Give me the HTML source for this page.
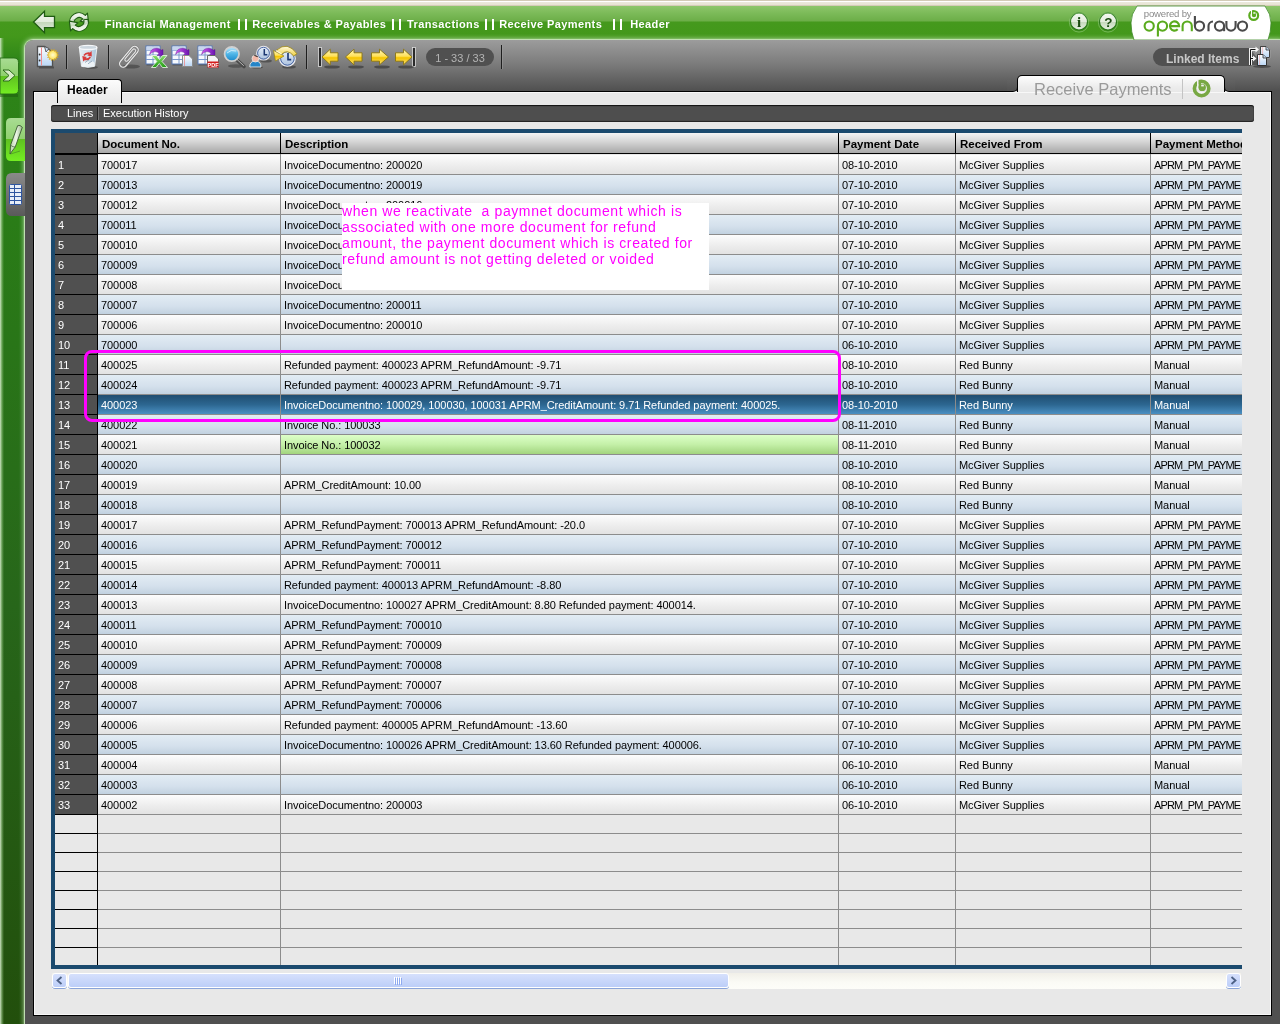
<!DOCTYPE html><html><head><meta charset="utf-8"><style>
*{margin:0;padding:0;box-sizing:border-box}
html,body{width:1280px;height:1024px;overflow:hidden;background:#505050;font-family:"Liberation Sans",sans-serif}
.a{position:absolute}
#top{left:0;top:0;width:1280px;height:6px;background:linear-gradient(#d3cbb7 0,#d3cbb7 1px,#fff 1px,#fff 2px,#ece9dc 2px,#e6e2d2 5px,#d5ccb8 5px)}
#green{left:0;top:6px;width:1280px;height:1018px;background:linear-gradient(#8ec66b 0,#7ab957 8px,#6cae48 15px,#45991d 16px,#43981b 30px,#2e8518 55px,#2a7d17 200px,#27661a 600px,#224f0c 1018px)}
#lstrip{left:0;top:38px;width:4px;height:986px;background:linear-gradient(90deg,rgba(215,235,205,0.95),rgba(160,205,140,0.5) 2px,rgba(60,140,40,0))}
#panel{left:25px;top:40px;width:1255px;height:984px;background:linear-gradient(#9c9c9c 0,#7a7a7a 25px,#535353 49px,#505050 51px);border-top-left-radius:8px;box-shadow:0 0 1px 1px #c8e6bb,0 0 4px 2px rgba(200,230,187,0.6)}
#content{left:33px;top:91px;width:1239px;height:925px;background:#e8e8e8;border:1px solid #000;box-shadow:inset 0 0 0 1px #f8f8f8}
.crumb{left:105px;top:18px;color:#fff;font-weight:bold;font-size:11px;line-height:13px;white-space:pre;letter-spacing:0.4px}
.sep{width:1px;background:#2a2a2a;box-shadow:1px 0 0 #a8a8a8}
#subtabs{left:51px;top:105px;width:1203px;height:17px;background:#4e4e4e;border-radius:3px;box-shadow:inset 0 1px 1px #111, inset 0 -1px 1px #222}
#subtabs span{position:absolute;top:1px;color:#fff;font-size:11px;line-height:15px}
#gridbox{left:51px;top:129px;width:1191px;height:840px;background:#1b4a6e;overflow:hidden}
#grid{left:4px;top:4px;width:1187px;height:832px;background:#e8e8e8;overflow:hidden}
.hd{position:absolute;top:0;height:20px;background:linear-gradient(#f4f4f4,#d8d8d8 40%,#a8a8a8);font-weight:bold;font-size:11.5px;line-height:22px;color:#000;padding-left:4px;white-space:nowrap;overflow:hidden}
.rn{position:absolute;left:0;width:42px;background:#505050;color:#fff;font-size:11px;padding-left:3px;line-height:21px}
.r{position:absolute;left:43px;width:1144px;height:19px}
.odd{background:linear-gradient(#fdfdfd,#ececec 60%,#e2e2e2)}
.even{background:linear-gradient(#e2ecf4,#d4e0ec 60%,#c2d2e0)}
.selr{background:linear-gradient(#1f4d70,#2c6690 50%,#4a8fc2)}
.c{position:absolute;top:0;height:19px;font-size:11px;line-height:21px;padding-left:3px;letter-spacing:-0.07px;white-space:nowrap;overflow:hidden;color:#000}
.vl{position:absolute;width:1px;background:#8c8c8c}
.hl{position:absolute;height:1px;background:#8c8c8c}
</style></head><body><div id="wrap" style="position:absolute;left:0;top:0;width:1280px;height:1024px;overflow:hidden;will-change:transform">
<div id="top" class="a"></div>
<div id="green" class="a"></div>
<div id="lstrip" class="a"></div>
<div id="panel" class="a"></div>
<div class="a crumb" style="left:104.8px">Financial Management</div>
<div class="a crumb" style="left:252.2px">Receivables &amp; Payables</div>
<div class="a crumb" style="left:407px">Transactions</div>
<div class="a crumb" style="left:499.2px">Receive Payments</div>
<div class="a crumb" style="left:630.2px">Header</div>
<div class="a" style="left:238px;top:19px;width:2px;height:11px;background:#fff"></div>
<div class="a" style="left:245px;top:19px;width:2px;height:11px;background:#fff"></div>
<div class="a" style="left:392px;top:19px;width:2px;height:11px;background:#fff"></div>
<div class="a" style="left:399px;top:19px;width:2px;height:11px;background:#fff"></div>
<div class="a" style="left:485px;top:19px;width:2px;height:11px;background:#fff"></div>
<div class="a" style="left:492px;top:19px;width:2px;height:11px;background:#fff"></div>
<div class="a" style="left:613px;top:19px;width:2px;height:11px;background:#fff"></div>
<div class="a" style="left:620px;top:19px;width:2px;height:11px;background:#fff"></div>
<div id="content" class="a"></div>
<div class="a" style="left:57px;top:79px;width:65px;height:24px;background:linear-gradient(#fcfcfc,#f4f4f4 40%,#e8e8e8);border:1px solid #000;border-bottom:none;border-radius:4px 4px 0 0;"></div>
<div class="a" style="left:67px;top:82.5px;font-weight:bold;font-size:12px;line-height:14px;color:#000">Header</div>
<div class="a" style="left:1012px;top:86px;width:218px;height:6px;background:#e8e8e8"></div>
<div class="a" style="left:1007px;top:80px;width:11px;height:12px;background:linear-gradient(#636363,#525252);border-right:1px solid #000;border-bottom:1px solid #000;border-bottom-right-radius:5px"></div>
<div class="a" style="left:1224px;top:80px;width:11px;height:12px;background:linear-gradient(#636363,#525252);border-left:1px solid #000;border-bottom:1px solid #000;border-bottom-left-radius:5px"></div>
<div class="a" style="left:1017px;top:75px;width:208px;height:17px;background:linear-gradient(#fdfdfd,#ececec 70%,#e8e8e8);border:1px solid #000;border-bottom:none;border-radius:5px 5px 0 0;"></div>
<div class="a" style="left:1034px;top:79px;font-size:16.5px;line-height:20px;color:#9a9a9a">Receive Payments</div>
<div class="a" style="left:1182px;top:79px;width:1px;height:20px;background:#c4c4c4"></div>
<svg class="a" style="left:1190px;top:77px" width="24" height="24"><g transform="translate(-1190,-77)"><circle cx="1201.6" cy="88.5" r="7.2" fill="none" stroke="#78a843" stroke-width="3.6"/><rect x="1197" y="79" width="1.7" height="10" fill="#f3f3f3"/><circle cx="1202.2" cy="87.4" r="3.7" fill="#78a843"/><rect x="1198.7" y="79.8" width="2.4" height="8" fill="#78a843"/><rect x="1201.2" y="84.6" width="2.6" height="1.8" fill="#f3f3f3"/></g></svg>
<div id="subtabs" class="a"><span style="left:16px">Lines</span><span style="left:46px;top:2px;width:1px;height:13px;background:#222;box-shadow:1px 0 0 #777"></span><span style="left:52px">Execution History</span></div>
<div class="a" style="left:1153px;top:48px;width:98px;height:18px;background:#505050;border-radius:9px 0 0 9px"></div>
<div class="a" style="left:1166px;top:51.5px;font-weight:bold;font-size:12px;line-height:15px;color:#c8c8c8">Linked Items</div>
<div class="a" style="left:426px;top:48px;width:68px;height:18px;background:#505050;border-radius:9px"></div>
<div class="a" style="left:426px;top:50.5px;width:68px;text-align:center;font-size:11px;line-height:15px;color:#b4b4b4">1 - 33 / 33</div>
<svg class="a" style="left:0;top:0" width="1280" height="1024"><defs>
<linearGradient id="gy" x1="0" y1="0" x2="0" y2="1"><stop offset="0" stop-color="#fff7c0"/><stop offset="0.45" stop-color="#ffe15a"/><stop offset="0.55" stop-color="#f5c400"/><stop offset="1" stop-color="#fbe27a"/></linearGradient>
<linearGradient id="gw" x1="0" y1="0" x2="0" y2="1"><stop offset="0" stop-color="#f6f9f3"/><stop offset="0.5" stop-color="#e2ecdc"/><stop offset="0.52" stop-color="#c4d8bb"/><stop offset="1" stop-color="#e6efe2"/></linearGradient>
<linearGradient id="gpage" x1="0" y1="0" x2="0" y2="1"><stop offset="0" stop-color="#ffffff"/><stop offset="1" stop-color="#b9d6f5"/></linearGradient>
<linearGradient id="gbtn1" x1="0" y1="0" x2="0" y2="1"><stop offset="0" stop-color="#a9dc94"/><stop offset="0.5" stop-color="#8fd06e"/><stop offset="0.5" stop-color="#5fc021"/><stop offset="1" stop-color="#74ee22"/></linearGradient>
<linearGradient id="gtab" x1="0" y1="0" x2="0" y2="1"><stop offset="0" stop-color="#8a8a8a"/><stop offset="1" stop-color="#5a5a5a"/></linearGradient>
<linearGradient id="gclock" x1="0" y1="0" x2="0" y2="1"><stop offset="0" stop-color="#e8f0fa"/><stop offset="1" stop-color="#a9c0de"/></linearGradient>
<linearGradient id="glens" x1="0" y1="0" x2="0" y2="1"><stop offset="0" stop-color="#bfe8fb"/><stop offset="0.5" stop-color="#4fb6e8"/><stop offset="1" stop-color="#1b87c9"/></linearGradient>
<linearGradient id="gpurple" x1="0" y1="0" x2="1" y2="0"><stop offset="0" stop-color="#d55af0"/><stop offset="1" stop-color="#6a14b0"/></linearGradient>
<linearGradient id="gxl" x1="0" y1="0" x2="0" y2="1"><stop offset="0" stop-color="#8ee070"/><stop offset="1" stop-color="#1e9a10"/></linearGradient>
<linearGradient id="gyarc" x1="0" y1="0" x2="0" y2="1"><stop offset="0" stop-color="#fffbe0"/><stop offset="1" stop-color="#f0d040"/></linearGradient>
<radialGradient id="gsun" cx="0.5" cy="0.5" r="0.5"><stop offset="0" stop-color="#fffbd0"/><stop offset="0.6" stop-color="#ffe870"/><stop offset="1" stop-color="#d9a81a"/></radialGradient>
</defs>
<path d="M33.5,22 L44.5,11.2 L44.5,16.4 L54.5,16.4 L54.5,27.6 L44.5,27.6 L44.5,32.8 Z" fill="url(#gw)" stroke="#1f5c12" stroke-width="1.3" stroke-linejoin="miter"/>
<g transform="translate(79,22) rotate(-8)" fill="url(#gw)" stroke="#1f5c12" stroke-width="1.1" stroke-linejoin="round"><path d="M-9.2,1.5 A9.2,9.2 0 0 1 7.2,-5.6 L9.6,-7.6 L9.4,2.2 L1.2,-0.6 L4.1,-2.6 A5.2,5.2 0 0 0 -5,1.5 Z"/><g transform="rotate(180)"><path d="M-9.2,1.5 A9.2,9.2 0 0 1 7.2,-5.6 L9.6,-7.6 L9.4,2.2 L1.2,-0.6 L4.1,-2.6 A5.2,5.2 0 0 0 -5,1.5 Z"/></g></g>
<circle cx="1079" cy="21.5" r="8.6" fill="url(#gw)" stroke="#2b7a1a" stroke-width="1.3"/>
<circle cx="1079" cy="22.5" r="9.6" fill="none" stroke="#b8e0a8" stroke-width="0.6" opacity="0.7"/>
<circle cx="1108" cy="21.5" r="8.6" fill="url(#gw)" stroke="#2b7a1a" stroke-width="1.3"/>
<circle cx="1108" cy="22.5" r="9.6" fill="none" stroke="#b8e0a8" stroke-width="0.6" opacity="0.7"/>
<text x="1079" y="27" text-anchor="middle" font-family="Liberation Serif" font-weight="bold" font-size="15" fill="#1a4a10">i</text>
<text x="1108.3" y="26.8" text-anchor="middle" font-family="Liberation Sans" font-weight="bold" font-size="13.5" fill="#1a4a10">?</text>
<rect x="39" y="66.5" width="15" height="2" fill="#222" opacity="0.45"/>
<path d="M37.5,46.5 L44.5,46.5 L52.5,52 L52.5,66.5 L37.5,66.5 Z" fill="url(#gpage)" stroke="#505050" stroke-width="1.3"/>
<line x1="41.5" y1="47.5" x2="41.5" y2="65.5" stroke="#f08a8a" stroke-width="1"/>
<circle cx="39.6" cy="54.5" r="0.9" fill="#333"/><circle cx="39.6" cy="60.5" r="0.9" fill="#333"/>
<path d="M44.5,46.5 L49,48.5 L46,52 Z" fill="#c8dcf4" stroke="#505050" stroke-width="0.9"/>
<polygon points="58.70,55.00 56.70,55.89 58.12,57.56 55.93,57.49 56.48,59.61 54.54,58.60 54.11,60.75 52.80,59.00 51.49,60.75 51.06,58.60 49.12,59.61 49.67,57.49 47.48,57.56 48.90,55.89 46.90,55.00 48.90,54.11 47.48,52.44 49.67,52.51 49.12,50.39 51.06,51.40 51.49,49.25 52.80,51.00 54.11,49.25 54.54,51.40 56.48,50.39 55.93,52.51 58.12,52.44 56.70,54.11" fill="url(#gsun)" stroke="#d9a81a" stroke-width="0.5"/>
<rect x="66" y="45" width="1" height="24" fill="#1e1e1e"/><rect x="67" y="45" width="1" height="24" fill="#a0a0a0" opacity="0.5"/>
<rect x="108" y="45" width="1" height="24" fill="#1e1e1e"/><rect x="109" y="45" width="1" height="24" fill="#a0a0a0" opacity="0.5"/>
<rect x="306" y="45" width="1" height="24" fill="#1e1e1e"/><rect x="307" y="45" width="1" height="24" fill="#a0a0a0" opacity="0.5"/>
<rect x="501" y="45" width="1" height="24" fill="#1e1e1e"/><rect x="502" y="45" width="1" height="24" fill="#a0a0a0" opacity="0.5"/>
<ellipse cx="91" cy="67.3" rx="7" ry="1.6" fill="#2a2a2a" opacity="0.45"/>
<linearGradient id="gtrash" x1="0" y1="0" x2="1" y2="0"><stop offset="0" stop-color="#e4ecf2"/><stop offset="0.5" stop-color="#d2e0ea"/><stop offset="1" stop-color="#a9c3da"/></linearGradient>
<path d="M79.3,47.5 L96.9,47.5 L94.6,66.3 Q88,68.4 81.5,66.3 Z" fill="url(#gtrash)" stroke="#f2f6f8" stroke-width="0.9"/>
<ellipse cx="88.1" cy="47.4" rx="8.8" ry="2.1" fill="#cbd6de" stroke="#f6f8fa" stroke-width="1.3"/>
<path d="M82.5,63 Q86,60 90,62 Q93,60 94.5,63 L94.3,66 Q88,67.6 81.8,66 Z" fill="#f2f6f8" opacity="0.9"/>
<path d="M85,62.5 L89,59.8 M88,63.8 L92,61" stroke="#7890a8" stroke-width="0.7"/>
<path d="M83.3,55 Q85.5,51.6 90,52.4 L91.6,51 L91.8,56.6 L87.2,55.6 L88.8,54.6 Q86,53.6 84.6,56 Z" fill="#d83a3a"/>
<path d="M91,57.5 Q89,61 84.6,60.2 L83.2,61.6 L82.3,56 L87,57 L85.6,58 Q88.4,59 89.6,56.6 Z" fill="#d83a3a"/>
<ellipse cx="131" cy="66.5" rx="9" ry="2" fill="#2a2a2a" opacity="0.45"/>
<g transform="translate(123.2,63.6) rotate(-50)" fill="none"><rect x="-3.6" y="-3.6" width="25" height="7.2" rx="3.6" stroke="#7a7a7a" stroke-width="2.2"/><rect x="-3.6" y="-3.6" width="25" height="7.2" rx="3.6" stroke="#ececec" stroke-width="1.2"/><rect x="3.5" y="-1.7" width="15" height="3.4" rx="1.7" stroke="#7a7a7a" stroke-width="2"/><rect x="3.5" y="-1.7" width="15" height="3.4" rx="1.7" stroke="#e4e4e4" stroke-width="1.1"/></g>
<rect x="146.5" y="64.0" width="14" height="1.5" fill="#222" opacity="0.4"/><rect x="146.0" y="46.0" width="14" height="18" fill="#f6f9fd" stroke="#5578b8" stroke-width="1"/><line x1="146.0" y1="50.5" x2="160.0" y2="50.5" stroke="#7a98cc" stroke-width="1"/><line x1="146.0" y1="55.0" x2="160.0" y2="55.0" stroke="#7a98cc" stroke-width="1"/><line x1="146.0" y1="59.5" x2="160.0" y2="59.5" stroke="#7a98cc" stroke-width="1"/><line x1="153.0" y1="46.0" x2="153.0" y2="64.0" stroke="#7a98cc" stroke-width="1"/><rect x="146.5" y="46.5" width="13" height="4.0" fill="#c8d6ee"/>
<path transform="translate(150,49)" d="M-0.5,5.5 Q1,-1.2 7,-0.8 Q10,-0.5 11.2,1.2 L13,0.5 L13,6.5 L7,6.5 L9,4.6 Q7.5,2.6 5,2.6 Q2,2.8 -0.5,5.5 Z" fill="url(#gpurple)" stroke="#5a1090" stroke-width="0.4"/>
<path d="M151.5,55.5 L156.5,55.5 L159.5,59.5 L162.5,55.5 L167,55.5 L162,61.5 L167.5,67.5 L162.5,67.5 L159.3,63.5 L156,67.5 L151.5,67.5 L156.8,61.5 Z" fill="url(#gxl)" stroke="#f0f8ee" stroke-width="0.8"/>
<rect x="172.5" y="64.0" width="14" height="1.5" fill="#222" opacity="0.4"/><rect x="172.0" y="46.0" width="14" height="18" fill="#f6f9fd" stroke="#5578b8" stroke-width="1"/><line x1="172.0" y1="50.5" x2="186.0" y2="50.5" stroke="#7a98cc" stroke-width="1"/><line x1="172.0" y1="55.0" x2="186.0" y2="55.0" stroke="#7a98cc" stroke-width="1"/><line x1="172.0" y1="59.5" x2="186.0" y2="59.5" stroke="#7a98cc" stroke-width="1"/><line x1="179.0" y1="46.0" x2="179.0" y2="64.0" stroke="#7a98cc" stroke-width="1"/><rect x="172.5" y="46.5" width="13" height="4.0" fill="#c8d6ee"/>
<path transform="translate(176,49)" d="M-0.5,5.5 Q1,-1.2 7,-0.8 Q10,-0.5 11.2,1.2 L13,0.5 L13,6.5 L7,6.5 L9,4.6 Q7.5,2.6 5,2.6 Q2,2.8 -0.5,5.5 Z" fill="url(#gpurple)" stroke="#5a1090" stroke-width="0.4"/>
<path d="M182.5,55.5 L189,55.5 L192.5,59 L192.5,66.5 L182.5,66.5 Z" fill="url(#gpage)" stroke="#8a8a8a" stroke-width="1"/>
<line x1="184.5" y1="56" x2="184.5" y2="66" stroke="#f08a8a" stroke-width="0.8"/>
<rect x="198.5" y="64.0" width="14" height="1.5" fill="#222" opacity="0.4"/><rect x="198.0" y="46.0" width="14" height="18" fill="#f6f9fd" stroke="#5578b8" stroke-width="1"/><line x1="198.0" y1="50.5" x2="212.0" y2="50.5" stroke="#7a98cc" stroke-width="1"/><line x1="198.0" y1="55.0" x2="212.0" y2="55.0" stroke="#7a98cc" stroke-width="1"/><line x1="198.0" y1="59.5" x2="212.0" y2="59.5" stroke="#7a98cc" stroke-width="1"/><line x1="205.0" y1="46.0" x2="205.0" y2="64.0" stroke="#7a98cc" stroke-width="1"/><rect x="198.5" y="46.5" width="13" height="4.0" fill="#c8d6ee"/>
<path transform="translate(202,49)" d="M-0.5,5.5 Q1,-1.2 7,-0.8 Q10,-0.5 11.2,1.2 L13,0.5 L13,6.5 L7,6.5 L9,4.6 Q7.5,2.6 5,2.6 Q2,2.8 -0.5,5.5 Z" fill="url(#gpurple)" stroke="#5a1090" stroke-width="0.4"/>
<path d="M207.5,55.5 L215,55.5 L218.5,59 L218.5,68 L207.5,68 Z" fill="#f4f4f4" stroke="#666" stroke-width="1"/>
<rect x="207.5" y="61.5" width="11" height="6" fill="#d41c1c"/>
<text x="213" y="67" text-anchor="middle" font-family="Liberation Sans" font-weight="bold" font-size="5.5" fill="#fff">PDF</text>
<ellipse cx="236" cy="66" rx="8" ry="1.8" fill="#222" opacity="0.4"/>
<line x1="236.5" y1="59.5" x2="244" y2="66.5" stroke="#4a4a4a" stroke-width="3.6" stroke-linecap="round"/>
<line x1="236.5" y1="59" x2="243.5" y2="65.5" stroke="#b8b8b8" stroke-width="1" stroke-linecap="round"/>
<circle cx="231.8" cy="54" r="7.2" fill="url(#glens)" stroke="#d0d0d0" stroke-width="1.8"/>
<path d="M227,53 Q231,49 236,51" stroke="#e0f4fc" stroke-width="1" fill="none" opacity="0.8"/>
<ellipse cx="266" cy="61" rx="6" ry="1.6" fill="#222" opacity="0.45"/>
<circle cx="263.5" cy="53.2" r="6.8" fill="url(#gclock)" stroke="#e6e6ea" stroke-width="1.2"/>
<circle cx="263.5" cy="53.2" r="5.9" fill="none" stroke="#2a4a90" stroke-width="0.8"/>
<path d="M264.3,49 L264.3,54.8 L267.3,54.8" stroke="#1a3570" stroke-width="1.5" fill="none"/>
<ellipse cx="257" cy="67.2" rx="6" ry="1.4" fill="#222" opacity="0.45"/>
<path d="M249.8,67 Q249.5,61.2 255.4,61 Q261.2,61.2 261,67 Z" fill="#2585c8" stroke="#e8e8e8" stroke-width="0.9"/>
<circle cx="255.4" cy="58.6" r="3.4" fill="#f4b8a8" stroke="#e8e8e8" stroke-width="0.8"/>
<path d="M253.5,55.6 Q256.5,54.4 258.6,57.6 L256,56.6 Z" fill="#111"/>
<ellipse cx="289" cy="67" rx="7" ry="1.6" fill="#222" opacity="0.45"/>
<circle cx="287.4" cy="58.4" r="7.8" fill="url(#gclock)" stroke="#ececf0" stroke-width="1.3"/>
<circle cx="287.4" cy="58.4" r="6.8" fill="none" stroke="#2a4a90" stroke-width="0.8"/>
<path d="M288,53 L288,59.6 L291.2,59.6" stroke="#1a3570" stroke-width="1.6" fill="none"/>
<path d="M276.5,50.2 Q287.5,40.6 297,53.8 L293.6,56 Q287.5,48.6 281.8,54.2 Z" fill="url(#gyarc)" stroke="#9a8410" stroke-width="0.8"/>
<path d="M273.5,50.5 L284,56 L275.5,61 Z" fill="url(#gy)" stroke="#9a8410" stroke-width="0.7"/><path d="M276.2,50.6 L281.6,53.9" stroke="#fff8d0" stroke-width="1.4"/>
<rect x="318.5" y="47.5" width="3" height="19" fill="#2a2a2a" stroke="#e0e0e0" stroke-width="0.8"/>
<path d="M322,57 L330.3,49.2 L330.3,52.8 L338,52.8 L338,61.2 L330.3,61.2 L330.3,64.8 Z" fill="url(#gy)" stroke="#8a7410" stroke-width="0.9"/>
<path d="M345.5,57 L354,49.2 L354,52.8 L362,52.8 L362,61.2 L354,61.2 L354,64.8 Z" fill="url(#gy)" stroke="#8a7410" stroke-width="0.9"/>
<path d="M388.5,57 L379.5,49.2 L379.5,52.8 L371.5,52.8 L371.5,61.2 L379.5,61.2 L379.5,64.8 Z" fill="url(#gy)" stroke="#8a7410" stroke-width="0.9"/>
<path d="M412,57 L403.5,49.2 L403.5,52.8 L395.5,52.8 L395.5,61.2 L403.5,61.2 L403.5,64.8 Z" fill="url(#gy)" stroke="#8a7410" stroke-width="0.9"/>
<rect x="412.5" y="47.5" width="3" height="19" fill="#2a2a2a" stroke="#e0e0e0" stroke-width="0.8"/>
<ellipse cx="332" cy="67" rx="8" ry="1.6" fill="#222" opacity="0.5"/>
<ellipse cx="356" cy="67" rx="8" ry="1.6" fill="#222" opacity="0.5"/>
<ellipse cx="382" cy="67" rx="8" ry="1.6" fill="#222" opacity="0.5"/>
<ellipse cx="406" cy="67" rx="8" ry="1.6" fill="#222" opacity="0.5"/>
<path d="M1251,50 L1257,58 L1257,65 L1251,65 Z" fill="#3a3a3a" opacity="0.6"/>
<ellipse cx="1262" cy="66.5" rx="9" ry="1.5" fill="#222" opacity="0.5"/>
<path d="M1250.5,65 L1250.5,49.5 L1256,49.5 M1250.5,58.5 L1253.5,58.5" fill="none" stroke="#f0f0f0" stroke-width="3"/>
<path d="M1250.5,65 L1250.5,49.5 L1256,49.5 M1250.5,58.5 L1253.5,58.5" fill="none" stroke="#111" stroke-width="1"/>
<path d="M1255.5,46.5 L1259,49.5 L1255.5,52.5 Z M1253,55.5 L1256.5,58.5 L1253,61.5 Z" fill="#f4f4f4"/>
<path d="M1260.5,46.5 L1266,46.5 L1269.5,50 L1269.5,57.5 L1260.5,57.5 Z" fill="url(#gpage)" stroke="#333" stroke-width="1" />
<path d="M1260.5,46.5 L1266,46.5 L1269.5,50 L1269.5,57.5 L1260.5,57.5 Z" fill="none" stroke="#ddd" stroke-width="0.5" transform="translate(0.6,0.6)" opacity="0.5"/>
<line x1="1262.6" y1="47" x2="1262.6" y2="57" stroke="#f4a0a0" stroke-width="0.6"/>
<path d="M1266,46.5 L1266,50 L1269.5,50" fill="#c0d4ec" stroke="#333" stroke-width="0.8"/>
<path d="M1257.5,54.5 L1263,54.5 L1266.5,58 L1266.5,65.5 L1257.5,65.5 Z" fill="url(#gpage)" stroke="#333" stroke-width="1"/>
<line x1="1259.6" y1="55" x2="1259.6" y2="65" stroke="#f4a0a0" stroke-width="0.6"/>
<path d="M1263,54.5 L1263,58 L1266.5,58" fill="#c0d4ec" stroke="#333" stroke-width="0.8"/>
<rect x="0" y="94" width="18" height="3" fill="#1d5a0e" opacity="0.5"/><path d="M0,58 L14,58 Q18.5,58 18.5,62.5 L18.5,89.5 Q18.5,94 14,94 L0,94 Z" fill="url(#gbtn1)" stroke="#256d14" stroke-width="0.9"/>
<path d="M3,70 L9,70 L15,75.5 L9,81 L3,81 L9,75.5 Z" fill="#d8ecc8" stroke="#2a6a18" stroke-width="1"/>
<path d="M25,118 L11,118 Q6,118 6,123 L6,156 Q6,161 11,161 L25,161 Z" fill="url(#gbtn1)"/>
<linearGradient id="gpen" x1="0" y1="0" x2="1" y2="0"><stop offset="0" stop-color="#b8d0a8"/><stop offset="0.5" stop-color="#eef6e8"/><stop offset="1" stop-color="#98b888"/></linearGradient><path d="M17.65,125.65 Q20,124.5 22.35,127.35 L15.25,146.85 L10,154 L10.55,145.15 Z" fill="url(#gpen)" stroke="#3a5a30" stroke-width="0.9"/><path d="M10.55,145.15 Q13,147.5 15.25,146.85" fill="none" stroke="#3a5a30" stroke-width="0.7"/>
<path d="M10.5,154 L20,151" stroke="#3a6a28" stroke-width="0.8" opacity="0.6"/>
<path d="M25,173 L12,173 Q6,173 6,179 L6,210 Q6,216 12,216 L25,216 Z" fill="url(#gtab)"/>
<rect x="9.5" y="184.5" width="12" height="20" rx="1" fill="#e8eef8" stroke="#2f55a0" stroke-width="1"/>
<line x1="9.5" y1="188.5" x2="21.5" y2="188.5" stroke="#2f55a0" stroke-width="1"/>
<line x1="9.5" y1="192.5" x2="21.5" y2="192.5" stroke="#2f55a0" stroke-width="1"/>
<line x1="9.5" y1="196.5" x2="21.5" y2="196.5" stroke="#2f55a0" stroke-width="1"/>
<line x1="9.5" y1="200.5" x2="21.5" y2="200.5" stroke="#2f55a0" stroke-width="1"/>
<line x1="14.5" y1="184.5" x2="14.5" y2="204.5" stroke="#2f55a0" stroke-width="1"/>
</svg>
<svg class="a" style="left:1125px;top:0" width="155" height="40">
<path d="M12,6 L140,6 Q146,14 146,23 Q146,32 143,40 L9,40 Q6,32 6,23 Q6,14 12,6 Z" fill="#fff" stroke="#3f8a28" stroke-width="0.8"/>
<text x="18.8" y="16.8" font-family="Liberation Sans" font-size="9.6" fill="#8a8a8a" letter-spacing="-0.2">powered by</text>
<circle cx="24.2" cy="26.1" r="4.6" fill="none" stroke="#5aab1e" stroke-width="2.1"/>
<circle cx="37.5" cy="26.1" r="4.6" fill="none" stroke="#5aab1e" stroke-width="2.1"/>
<line x1="32.9" y1="26.1" x2="32.9" y2="36.5" stroke="#5aab1e" stroke-width="2.1"/>
<path d="M44.9,26.1 L54.1,26.1 A4.6,4.6 0 1 0 52.72,29.32" fill="none" stroke="#5aab1e" stroke-width="2.1"/>
<path d="M57.6,31.2 L57.6,26.1 A4.6,4.6 0 0 1 66.8,26.1 L66.8,31.2" fill="none" stroke="#5aab1e" stroke-width="2.1"/>
<circle cx="74.5" cy="26.1" r="4.6" fill="none" stroke="#4a4a4a" stroke-width="2.1"/>
<line x1="69.9" y1="16" x2="69.9" y2="26.1" stroke="#4a4a4a" stroke-width="2.1"/>
<path d="M83.5,31.2 L83.5,26.1 A4.6,4.6 0 0 1 88,21.5" fill="none" stroke="#4a4a4a" stroke-width="2.1"/>
<circle cx="94.5" cy="26.1" r="4.6" fill="none" stroke="#4a4a4a" stroke-width="2.1"/>
<line x1="99.1" y1="26.1" x2="99.1" y2="31.2" stroke="#4a4a4a" stroke-width="2.1"/>
<path d="M101.4,21 L101.4,26.1 A4.6,4.6 0 0 0 110.6,26.1 L110.6,21" fill="none" stroke="#4a4a4a" stroke-width="2.1"/>
<circle cx="117.5" cy="26.1" r="4.6" fill="none" stroke="#4a4a4a" stroke-width="2.1"/>
<circle cx="128.7" cy="15.5" r="4.4" fill="none" stroke="#5aab1e" stroke-width="2.2"/>
<rect x="126" y="10" width="1" height="5.5" fill="#fff"/>
<circle cx="129" cy="15" r="2.2" fill="#5aab1e"/>
<rect x="127" y="10.5" width="1.5" height="4.5" fill="#5aab1e"/>
<rect x="128.3" y="12.6" width="1.6" height="1.1" fill="#fff"/>
</svg>
<div id="gridbox" class="a"><div id="grid" class="a">
<div class="a" style="left:0;top:0;width:42px;height:20px;background:#505050"></div>
<div class="hd" style="left:43px;width:182px">Document No.</div>
<div class="hd" style="left:226px;width:557px">Description</div>
<div class="hd" style="left:784px;width:116px">Payment Date</div>
<div class="hd" style="left:901px;width:194px">Received From</div>
<div class="hd" style="left:1096px;width:248px">Payment Method</div>
<div class="a" style="left:42px;top:0;width:1px;height:20px;background:#000"></div>
<div class="a" style="left:225px;top:0;width:1px;height:20px;background:#000"></div>
<div class="a" style="left:783px;top:0;width:1px;height:20px;background:#000"></div>
<div class="a" style="left:900px;top:0;width:1px;height:20px;background:#000"></div>
<div class="a" style="left:1095px;top:0;width:1px;height:20px;background:#000"></div>
<div class="a" style="left:0;top:20px;width:1187px;height:1px;background:#000"></div>
<div class="a" style="left:0;top:20px;width:43px;height:2px;background:#000"></div>
<div class="rn" style="top:22px;height:19px">1</div>
<div class="r odd" style="top:22px">
<div class="c" style="left:0px;width:182px;">700017</div>
<div class="c" style="left:183px;width:557px;">InvoiceDocumentno: 200020</div>
<div class="c" style="left:741px;width:116px;">08-10-2010</div>
<div class="c" style="left:858px;width:194px;">McGiver Supplies</div>
<div class="c" style="left:1053px;width:248px;letter-spacing:-0.85px;">APRM_PM_PAYME</div>
</div>
<div class="a" style="left:0;top:41px;width:43px;height:1px;background:#000"></div>
<div class="hl" style="left:43px;top:41px;width:1144px"></div>
<div class="rn" style="top:42px;height:19px">2</div>
<div class="r even" style="top:42px">
<div class="c" style="left:0px;width:182px;">700013</div>
<div class="c" style="left:183px;width:557px;">InvoiceDocumentno: 200019</div>
<div class="c" style="left:741px;width:116px;">07-10-2010</div>
<div class="c" style="left:858px;width:194px;">McGiver Supplies</div>
<div class="c" style="left:1053px;width:248px;letter-spacing:-0.85px;">APRM_PM_PAYME</div>
</div>
<div class="a" style="left:0;top:61px;width:43px;height:1px;background:#000"></div>
<div class="hl" style="left:43px;top:61px;width:1144px"></div>
<div class="rn" style="top:62px;height:19px">3</div>
<div class="r odd" style="top:62px">
<div class="c" style="left:0px;width:182px;">700012</div>
<div class="c" style="left:183px;width:557px;">InvoiceDocumentno: 200016</div>
<div class="c" style="left:741px;width:116px;">07-10-2010</div>
<div class="c" style="left:858px;width:194px;">McGiver Supplies</div>
<div class="c" style="left:1053px;width:248px;letter-spacing:-0.85px;">APRM_PM_PAYME</div>
</div>
<div class="a" style="left:0;top:81px;width:43px;height:1px;background:#000"></div>
<div class="hl" style="left:43px;top:81px;width:1144px"></div>
<div class="rn" style="top:82px;height:19px">4</div>
<div class="r even" style="top:82px">
<div class="c" style="left:0px;width:182px;">700011</div>
<div class="c" style="left:183px;width:557px;">InvoiceDocumentno: 200015</div>
<div class="c" style="left:741px;width:116px;">07-10-2010</div>
<div class="c" style="left:858px;width:194px;">McGiver Supplies</div>
<div class="c" style="left:1053px;width:248px;letter-spacing:-0.85px;">APRM_PM_PAYME</div>
</div>
<div class="a" style="left:0;top:101px;width:43px;height:1px;background:#000"></div>
<div class="hl" style="left:43px;top:101px;width:1144px"></div>
<div class="rn" style="top:102px;height:19px">5</div>
<div class="r odd" style="top:102px">
<div class="c" style="left:0px;width:182px;">700010</div>
<div class="c" style="left:183px;width:557px;">InvoiceDocumentno: 200014</div>
<div class="c" style="left:741px;width:116px;">07-10-2010</div>
<div class="c" style="left:858px;width:194px;">McGiver Supplies</div>
<div class="c" style="left:1053px;width:248px;letter-spacing:-0.85px;">APRM_PM_PAYME</div>
</div>
<div class="a" style="left:0;top:121px;width:43px;height:1px;background:#000"></div>
<div class="hl" style="left:43px;top:121px;width:1144px"></div>
<div class="rn" style="top:122px;height:19px">6</div>
<div class="r even" style="top:122px">
<div class="c" style="left:0px;width:182px;">700009</div>
<div class="c" style="left:183px;width:557px;">InvoiceDocumentno: 200013</div>
<div class="c" style="left:741px;width:116px;">07-10-2010</div>
<div class="c" style="left:858px;width:194px;">McGiver Supplies</div>
<div class="c" style="left:1053px;width:248px;letter-spacing:-0.85px;">APRM_PM_PAYME</div>
</div>
<div class="a" style="left:0;top:141px;width:43px;height:1px;background:#000"></div>
<div class="hl" style="left:43px;top:141px;width:1144px"></div>
<div class="rn" style="top:142px;height:19px">7</div>
<div class="r odd" style="top:142px">
<div class="c" style="left:0px;width:182px;">700008</div>
<div class="c" style="left:183px;width:557px;">InvoiceDocumentno: 200012</div>
<div class="c" style="left:741px;width:116px;">07-10-2010</div>
<div class="c" style="left:858px;width:194px;">McGiver Supplies</div>
<div class="c" style="left:1053px;width:248px;letter-spacing:-0.85px;">APRM_PM_PAYME</div>
</div>
<div class="a" style="left:0;top:161px;width:43px;height:1px;background:#000"></div>
<div class="hl" style="left:43px;top:161px;width:1144px"></div>
<div class="rn" style="top:162px;height:19px">8</div>
<div class="r even" style="top:162px">
<div class="c" style="left:0px;width:182px;">700007</div>
<div class="c" style="left:183px;width:557px;">InvoiceDocumentno: 200011</div>
<div class="c" style="left:741px;width:116px;">07-10-2010</div>
<div class="c" style="left:858px;width:194px;">McGiver Supplies</div>
<div class="c" style="left:1053px;width:248px;letter-spacing:-0.85px;">APRM_PM_PAYME</div>
</div>
<div class="a" style="left:0;top:181px;width:43px;height:1px;background:#000"></div>
<div class="hl" style="left:43px;top:181px;width:1144px"></div>
<div class="rn" style="top:182px;height:19px">9</div>
<div class="r odd" style="top:182px">
<div class="c" style="left:0px;width:182px;">700006</div>
<div class="c" style="left:183px;width:557px;">InvoiceDocumentno: 200010</div>
<div class="c" style="left:741px;width:116px;">07-10-2010</div>
<div class="c" style="left:858px;width:194px;">McGiver Supplies</div>
<div class="c" style="left:1053px;width:248px;letter-spacing:-0.85px;">APRM_PM_PAYME</div>
</div>
<div class="a" style="left:0;top:201px;width:43px;height:1px;background:#000"></div>
<div class="hl" style="left:43px;top:201px;width:1144px"></div>
<div class="rn" style="top:202px;height:19px">10</div>
<div class="r even" style="top:202px">
<div class="c" style="left:0px;width:182px;">700000</div>
<div class="c" style="left:183px;width:557px;"></div>
<div class="c" style="left:741px;width:116px;">06-10-2010</div>
<div class="c" style="left:858px;width:194px;">McGiver Supplies</div>
<div class="c" style="left:1053px;width:248px;letter-spacing:-0.85px;">APRM_PM_PAYME</div>
</div>
<div class="a" style="left:0;top:221px;width:43px;height:1px;background:#000"></div>
<div class="hl" style="left:43px;top:221px;width:1144px"></div>
<div class="rn" style="top:222px;height:19px">11</div>
<div class="r odd" style="top:222px">
<div class="c" style="left:0px;width:182px;">400025</div>
<div class="c" style="left:183px;width:557px;">Refunded payment: 400023 APRM_RefundAmount: -9.71</div>
<div class="c" style="left:741px;width:116px;">08-10-2010</div>
<div class="c" style="left:858px;width:194px;">Red Bunny</div>
<div class="c" style="left:1053px;width:248px;">Manual</div>
</div>
<div class="a" style="left:0;top:241px;width:43px;height:1px;background:#000"></div>
<div class="hl" style="left:43px;top:241px;width:1144px"></div>
<div class="rn" style="top:242px;height:19px">12</div>
<div class="r even" style="top:242px">
<div class="c" style="left:0px;width:182px;">400024</div>
<div class="c" style="left:183px;width:557px;">Refunded payment: 400023 APRM_RefundAmount: -9.71</div>
<div class="c" style="left:741px;width:116px;">08-10-2010</div>
<div class="c" style="left:858px;width:194px;">Red Bunny</div>
<div class="c" style="left:1053px;width:248px;">Manual</div>
</div>
<div class="a" style="left:0;top:261px;width:43px;height:1px;background:#000"></div>
<div class="hl" style="left:43px;top:261px;width:1144px"></div>
<div class="rn" style="top:262px;height:19px">13</div>
<div class="r selr" style="top:262px">
<div class="c" style="left:0px;width:182px;color:#fff;">400023</div>
<div class="c" style="left:183px;width:557px;color:#fff;">InvoiceDocumentno: 100029, 100030, 100031 APRM_CreditAmount: 9.71 Refunded payment: 400025.</div>
<div class="c" style="left:741px;width:116px;color:#fff;">08-10-2010</div>
<div class="c" style="left:858px;width:194px;color:#fff;">Red Bunny</div>
<div class="c" style="left:1053px;width:248px;color:#fff;">Manual</div>
</div>
<div class="a" style="left:0;top:281px;width:43px;height:1px;background:#000"></div>
<div class="hl" style="left:43px;top:281px;width:1144px"></div>
<div class="rn" style="top:282px;height:19px">14</div>
<div class="r even" style="top:282px">
<div class="c" style="left:0px;width:182px;">400022</div>
<div class="c" style="left:183px;width:557px;">Invoice No.: 100033</div>
<div class="c" style="left:741px;width:116px;">08-11-2010</div>
<div class="c" style="left:858px;width:194px;">Red Bunny</div>
<div class="c" style="left:1053px;width:248px;">Manual</div>
</div>
<div class="a" style="left:0;top:301px;width:43px;height:1px;background:#000"></div>
<div class="hl" style="left:43px;top:301px;width:1144px"></div>
<div class="rn" style="top:302px;height:19px">15</div>
<div class="r odd" style="top:302px">
<div class="c" style="left:0px;width:182px;">400021</div>
<div class="c" style="left:183px;width:557px;background:linear-gradient(#dcffc8,#c4f0a8 50%,#a2d47e);">Invoice No.: 100032</div>
<div class="c" style="left:741px;width:116px;">08-11-2010</div>
<div class="c" style="left:858px;width:194px;">Red Bunny</div>
<div class="c" style="left:1053px;width:248px;">Manual</div>
</div>
<div class="a" style="left:0;top:321px;width:43px;height:1px;background:#000"></div>
<div class="hl" style="left:43px;top:321px;width:1144px"></div>
<div class="rn" style="top:322px;height:19px">16</div>
<div class="r even" style="top:322px">
<div class="c" style="left:0px;width:182px;">400020</div>
<div class="c" style="left:183px;width:557px;"></div>
<div class="c" style="left:741px;width:116px;">08-10-2010</div>
<div class="c" style="left:858px;width:194px;">McGiver Supplies</div>
<div class="c" style="left:1053px;width:248px;letter-spacing:-0.85px;">APRM_PM_PAYME</div>
</div>
<div class="a" style="left:0;top:341px;width:43px;height:1px;background:#000"></div>
<div class="hl" style="left:43px;top:341px;width:1144px"></div>
<div class="rn" style="top:342px;height:19px">17</div>
<div class="r odd" style="top:342px">
<div class="c" style="left:0px;width:182px;">400019</div>
<div class="c" style="left:183px;width:557px;">APRM_CreditAmount: 10.00</div>
<div class="c" style="left:741px;width:116px;">08-10-2010</div>
<div class="c" style="left:858px;width:194px;">Red Bunny</div>
<div class="c" style="left:1053px;width:248px;">Manual</div>
</div>
<div class="a" style="left:0;top:361px;width:43px;height:1px;background:#000"></div>
<div class="hl" style="left:43px;top:361px;width:1144px"></div>
<div class="rn" style="top:362px;height:19px">18</div>
<div class="r even" style="top:362px">
<div class="c" style="left:0px;width:182px;">400018</div>
<div class="c" style="left:183px;width:557px;"></div>
<div class="c" style="left:741px;width:116px;">08-10-2010</div>
<div class="c" style="left:858px;width:194px;">Red Bunny</div>
<div class="c" style="left:1053px;width:248px;">Manual</div>
</div>
<div class="a" style="left:0;top:381px;width:43px;height:1px;background:#000"></div>
<div class="hl" style="left:43px;top:381px;width:1144px"></div>
<div class="rn" style="top:382px;height:19px">19</div>
<div class="r odd" style="top:382px">
<div class="c" style="left:0px;width:182px;">400017</div>
<div class="c" style="left:183px;width:557px;">APRM_RefundPayment: 700013 APRM_RefundAmount: -20.0</div>
<div class="c" style="left:741px;width:116px;">07-10-2010</div>
<div class="c" style="left:858px;width:194px;">McGiver Supplies</div>
<div class="c" style="left:1053px;width:248px;letter-spacing:-0.85px;">APRM_PM_PAYME</div>
</div>
<div class="a" style="left:0;top:401px;width:43px;height:1px;background:#000"></div>
<div class="hl" style="left:43px;top:401px;width:1144px"></div>
<div class="rn" style="top:402px;height:19px">20</div>
<div class="r even" style="top:402px">
<div class="c" style="left:0px;width:182px;">400016</div>
<div class="c" style="left:183px;width:557px;">APRM_RefundPayment: 700012</div>
<div class="c" style="left:741px;width:116px;">07-10-2010</div>
<div class="c" style="left:858px;width:194px;">McGiver Supplies</div>
<div class="c" style="left:1053px;width:248px;letter-spacing:-0.85px;">APRM_PM_PAYME</div>
</div>
<div class="a" style="left:0;top:421px;width:43px;height:1px;background:#000"></div>
<div class="hl" style="left:43px;top:421px;width:1144px"></div>
<div class="rn" style="top:422px;height:19px">21</div>
<div class="r odd" style="top:422px">
<div class="c" style="left:0px;width:182px;">400015</div>
<div class="c" style="left:183px;width:557px;">APRM_RefundPayment: 700011</div>
<div class="c" style="left:741px;width:116px;">07-10-2010</div>
<div class="c" style="left:858px;width:194px;">McGiver Supplies</div>
<div class="c" style="left:1053px;width:248px;letter-spacing:-0.85px;">APRM_PM_PAYME</div>
</div>
<div class="a" style="left:0;top:441px;width:43px;height:1px;background:#000"></div>
<div class="hl" style="left:43px;top:441px;width:1144px"></div>
<div class="rn" style="top:442px;height:19px">22</div>
<div class="r even" style="top:442px">
<div class="c" style="left:0px;width:182px;">400014</div>
<div class="c" style="left:183px;width:557px;">Refunded payment: 400013 APRM_RefundAmount: -8.80</div>
<div class="c" style="left:741px;width:116px;">07-10-2010</div>
<div class="c" style="left:858px;width:194px;">McGiver Supplies</div>
<div class="c" style="left:1053px;width:248px;letter-spacing:-0.85px;">APRM_PM_PAYME</div>
</div>
<div class="a" style="left:0;top:461px;width:43px;height:1px;background:#000"></div>
<div class="hl" style="left:43px;top:461px;width:1144px"></div>
<div class="rn" style="top:462px;height:19px">23</div>
<div class="r odd" style="top:462px">
<div class="c" style="left:0px;width:182px;">400013</div>
<div class="c" style="left:183px;width:557px;">InvoiceDocumentno: 100027 APRM_CreditAmount: 8.80 Refunded payment: 400014.</div>
<div class="c" style="left:741px;width:116px;">07-10-2010</div>
<div class="c" style="left:858px;width:194px;">McGiver Supplies</div>
<div class="c" style="left:1053px;width:248px;letter-spacing:-0.85px;">APRM_PM_PAYME</div>
</div>
<div class="a" style="left:0;top:481px;width:43px;height:1px;background:#000"></div>
<div class="hl" style="left:43px;top:481px;width:1144px"></div>
<div class="rn" style="top:482px;height:19px">24</div>
<div class="r even" style="top:482px">
<div class="c" style="left:0px;width:182px;">400011</div>
<div class="c" style="left:183px;width:557px;">APRM_RefundPayment: 700010</div>
<div class="c" style="left:741px;width:116px;">07-10-2010</div>
<div class="c" style="left:858px;width:194px;">McGiver Supplies</div>
<div class="c" style="left:1053px;width:248px;letter-spacing:-0.85px;">APRM_PM_PAYME</div>
</div>
<div class="a" style="left:0;top:501px;width:43px;height:1px;background:#000"></div>
<div class="hl" style="left:43px;top:501px;width:1144px"></div>
<div class="rn" style="top:502px;height:19px">25</div>
<div class="r odd" style="top:502px">
<div class="c" style="left:0px;width:182px;">400010</div>
<div class="c" style="left:183px;width:557px;">APRM_RefundPayment: 700009</div>
<div class="c" style="left:741px;width:116px;">07-10-2010</div>
<div class="c" style="left:858px;width:194px;">McGiver Supplies</div>
<div class="c" style="left:1053px;width:248px;letter-spacing:-0.85px;">APRM_PM_PAYME</div>
</div>
<div class="a" style="left:0;top:521px;width:43px;height:1px;background:#000"></div>
<div class="hl" style="left:43px;top:521px;width:1144px"></div>
<div class="rn" style="top:522px;height:19px">26</div>
<div class="r even" style="top:522px">
<div class="c" style="left:0px;width:182px;">400009</div>
<div class="c" style="left:183px;width:557px;">APRM_RefundPayment: 700008</div>
<div class="c" style="left:741px;width:116px;">07-10-2010</div>
<div class="c" style="left:858px;width:194px;">McGiver Supplies</div>
<div class="c" style="left:1053px;width:248px;letter-spacing:-0.85px;">APRM_PM_PAYME</div>
</div>
<div class="a" style="left:0;top:541px;width:43px;height:1px;background:#000"></div>
<div class="hl" style="left:43px;top:541px;width:1144px"></div>
<div class="rn" style="top:542px;height:19px">27</div>
<div class="r odd" style="top:542px">
<div class="c" style="left:0px;width:182px;">400008</div>
<div class="c" style="left:183px;width:557px;">APRM_RefundPayment: 700007</div>
<div class="c" style="left:741px;width:116px;">07-10-2010</div>
<div class="c" style="left:858px;width:194px;">McGiver Supplies</div>
<div class="c" style="left:1053px;width:248px;letter-spacing:-0.85px;">APRM_PM_PAYME</div>
</div>
<div class="a" style="left:0;top:561px;width:43px;height:1px;background:#000"></div>
<div class="hl" style="left:43px;top:561px;width:1144px"></div>
<div class="rn" style="top:562px;height:19px">28</div>
<div class="r even" style="top:562px">
<div class="c" style="left:0px;width:182px;">400007</div>
<div class="c" style="left:183px;width:557px;">APRM_RefundPayment: 700006</div>
<div class="c" style="left:741px;width:116px;">07-10-2010</div>
<div class="c" style="left:858px;width:194px;">McGiver Supplies</div>
<div class="c" style="left:1053px;width:248px;letter-spacing:-0.85px;">APRM_PM_PAYME</div>
</div>
<div class="a" style="left:0;top:581px;width:43px;height:1px;background:#000"></div>
<div class="hl" style="left:43px;top:581px;width:1144px"></div>
<div class="rn" style="top:582px;height:19px">29</div>
<div class="r odd" style="top:582px">
<div class="c" style="left:0px;width:182px;">400006</div>
<div class="c" style="left:183px;width:557px;">Refunded payment: 400005 APRM_RefundAmount: -13.60</div>
<div class="c" style="left:741px;width:116px;">07-10-2010</div>
<div class="c" style="left:858px;width:194px;">McGiver Supplies</div>
<div class="c" style="left:1053px;width:248px;letter-spacing:-0.85px;">APRM_PM_PAYME</div>
</div>
<div class="a" style="left:0;top:601px;width:43px;height:1px;background:#000"></div>
<div class="hl" style="left:43px;top:601px;width:1144px"></div>
<div class="rn" style="top:602px;height:19px">30</div>
<div class="r even" style="top:602px">
<div class="c" style="left:0px;width:182px;">400005</div>
<div class="c" style="left:183px;width:557px;">InvoiceDocumentno: 100026 APRM_CreditAmount: 13.60 Refunded payment: 400006.</div>
<div class="c" style="left:741px;width:116px;">07-10-2010</div>
<div class="c" style="left:858px;width:194px;">McGiver Supplies</div>
<div class="c" style="left:1053px;width:248px;letter-spacing:-0.85px;">APRM_PM_PAYME</div>
</div>
<div class="a" style="left:0;top:621px;width:43px;height:1px;background:#000"></div>
<div class="hl" style="left:43px;top:621px;width:1144px"></div>
<div class="rn" style="top:622px;height:19px">31</div>
<div class="r odd" style="top:622px">
<div class="c" style="left:0px;width:182px;">400004</div>
<div class="c" style="left:183px;width:557px;"></div>
<div class="c" style="left:741px;width:116px;">06-10-2010</div>
<div class="c" style="left:858px;width:194px;">Red Bunny</div>
<div class="c" style="left:1053px;width:248px;">Manual</div>
</div>
<div class="a" style="left:0;top:641px;width:43px;height:1px;background:#000"></div>
<div class="hl" style="left:43px;top:641px;width:1144px"></div>
<div class="rn" style="top:642px;height:19px">32</div>
<div class="r even" style="top:642px">
<div class="c" style="left:0px;width:182px;">400003</div>
<div class="c" style="left:183px;width:557px;"></div>
<div class="c" style="left:741px;width:116px;">06-10-2010</div>
<div class="c" style="left:858px;width:194px;">Red Bunny</div>
<div class="c" style="left:1053px;width:248px;">Manual</div>
</div>
<div class="a" style="left:0;top:661px;width:43px;height:1px;background:#000"></div>
<div class="hl" style="left:43px;top:661px;width:1144px"></div>
<div class="rn" style="top:662px;height:19px">33</div>
<div class="r odd" style="top:662px">
<div class="c" style="left:0px;width:182px;">400002</div>
<div class="c" style="left:183px;width:557px;">InvoiceDocumentno: 200003</div>
<div class="c" style="left:741px;width:116px;">06-10-2010</div>
<div class="c" style="left:858px;width:194px;">McGiver Supplies</div>
<div class="c" style="left:1053px;width:248px;letter-spacing:-0.85px;">APRM_PM_PAYME</div>
</div>
<div class="a" style="left:0;top:681px;width:43px;height:1px;background:#000"></div>
<div class="hl" style="left:43px;top:681px;width:1144px"></div>
<div class="a" style="left:0;top:700px;width:43px;height:1px;background:#000"></div>
<div class="hl" style="left:43px;top:700px;width:1144px"></div>
<div class="a" style="left:0;top:719px;width:43px;height:1px;background:#000"></div>
<div class="hl" style="left:43px;top:719px;width:1144px"></div>
<div class="a" style="left:0;top:738px;width:43px;height:1px;background:#000"></div>
<div class="hl" style="left:43px;top:738px;width:1144px"></div>
<div class="a" style="left:0;top:757px;width:43px;height:1px;background:#000"></div>
<div class="hl" style="left:43px;top:757px;width:1144px"></div>
<div class="a" style="left:0;top:776px;width:43px;height:1px;background:#000"></div>
<div class="hl" style="left:43px;top:776px;width:1144px"></div>
<div class="a" style="left:0;top:795px;width:43px;height:1px;background:#000"></div>
<div class="hl" style="left:43px;top:795px;width:1144px"></div>
<div class="a" style="left:0;top:814px;width:43px;height:1px;background:#000"></div>
<div class="hl" style="left:43px;top:814px;width:1144px"></div>
<div class="a" style="left:42px;top:21px;width:1px;height:811px;background:#000"></div>
<div class="vl" style="left:225px;top:21px;height:811px"></div>
<div class="vl" style="left:783px;top:21px;height:811px"></div>
<div class="vl" style="left:900px;top:21px;height:811px"></div>
<div class="vl" style="left:1095px;top:21px;height:811px"></div>
</div></div>
<div class="a" style="left:342px;top:203px;width:367px;height:87px;background:#fff"></div>
<div class="a" style="left:342px;top:203px;width:367px;color:#ff00ff;font-size:14px;line-height:16px;letter-spacing:0.6px;white-space:pre">when we reactivate  a paymnet document which is
associated with one more document for refund
amount, the payment document which is created for
refund amount is not getting deleted or voided</div>
<div class="a" style="left:84px;top:350px;width:757px;height:72px;border:3px solid #ff00ff;border-radius:8px"></div>
<div class="a" style="left:52px;top:973px;width:1189px;height:16px;background:linear-gradient(#f1efe8,#fbfbf6 60%,#fdfdf9)"></div>
<div class="a" style="left:52px;top:973px;width:15px;height:15px;background:linear-gradient(#d6e0fc,#bccef8);border:1px solid #fff;border-radius:3px;box-shadow:0 1px 0 #8aa4d8"></div>
<div class="a" style="left:68px;top:973px;width:661px;height:15px;background:linear-gradient(#d6e0fc,#bccef8);border:1px solid #fff;border-radius:3px;box-shadow:0 1px 0 #8aa4d8"></div>
<div class="a" style="left:1226px;top:973px;width:15px;height:15px;background:linear-gradient(#d6e0fc,#bccef8);border:1px solid #fff;border-radius:3px;box-shadow:0 1px 0 #8aa4d8"></div>
<svg class="a" style="left:0;top:960px" width="1280" height="40"><path d="M61.5,17 L57.5,20.5 L61.5,24" fill="none" stroke="#4d6185" stroke-width="1.8"/><path d="M1231.5,17 L1235.5,20.5 L1231.5,24" fill="none" stroke="#4d6185" stroke-width="1.8"/><rect x="394" y="17" width="1" height="7" fill="#fff"/><rect x="395" y="18" width="1" height="7" fill="#8eaaf0"/><rect x="396" y="17" width="1" height="7" fill="#fff"/><rect x="397" y="18" width="1" height="7" fill="#8eaaf0"/><rect x="398" y="17" width="1" height="7" fill="#fff"/><rect x="399" y="18" width="1" height="7" fill="#8eaaf0"/><rect x="400" y="17" width="1" height="7" fill="#fff"/><rect x="401" y="18" width="1" height="7" fill="#8eaaf0"/></svg>
</div></body></html>
